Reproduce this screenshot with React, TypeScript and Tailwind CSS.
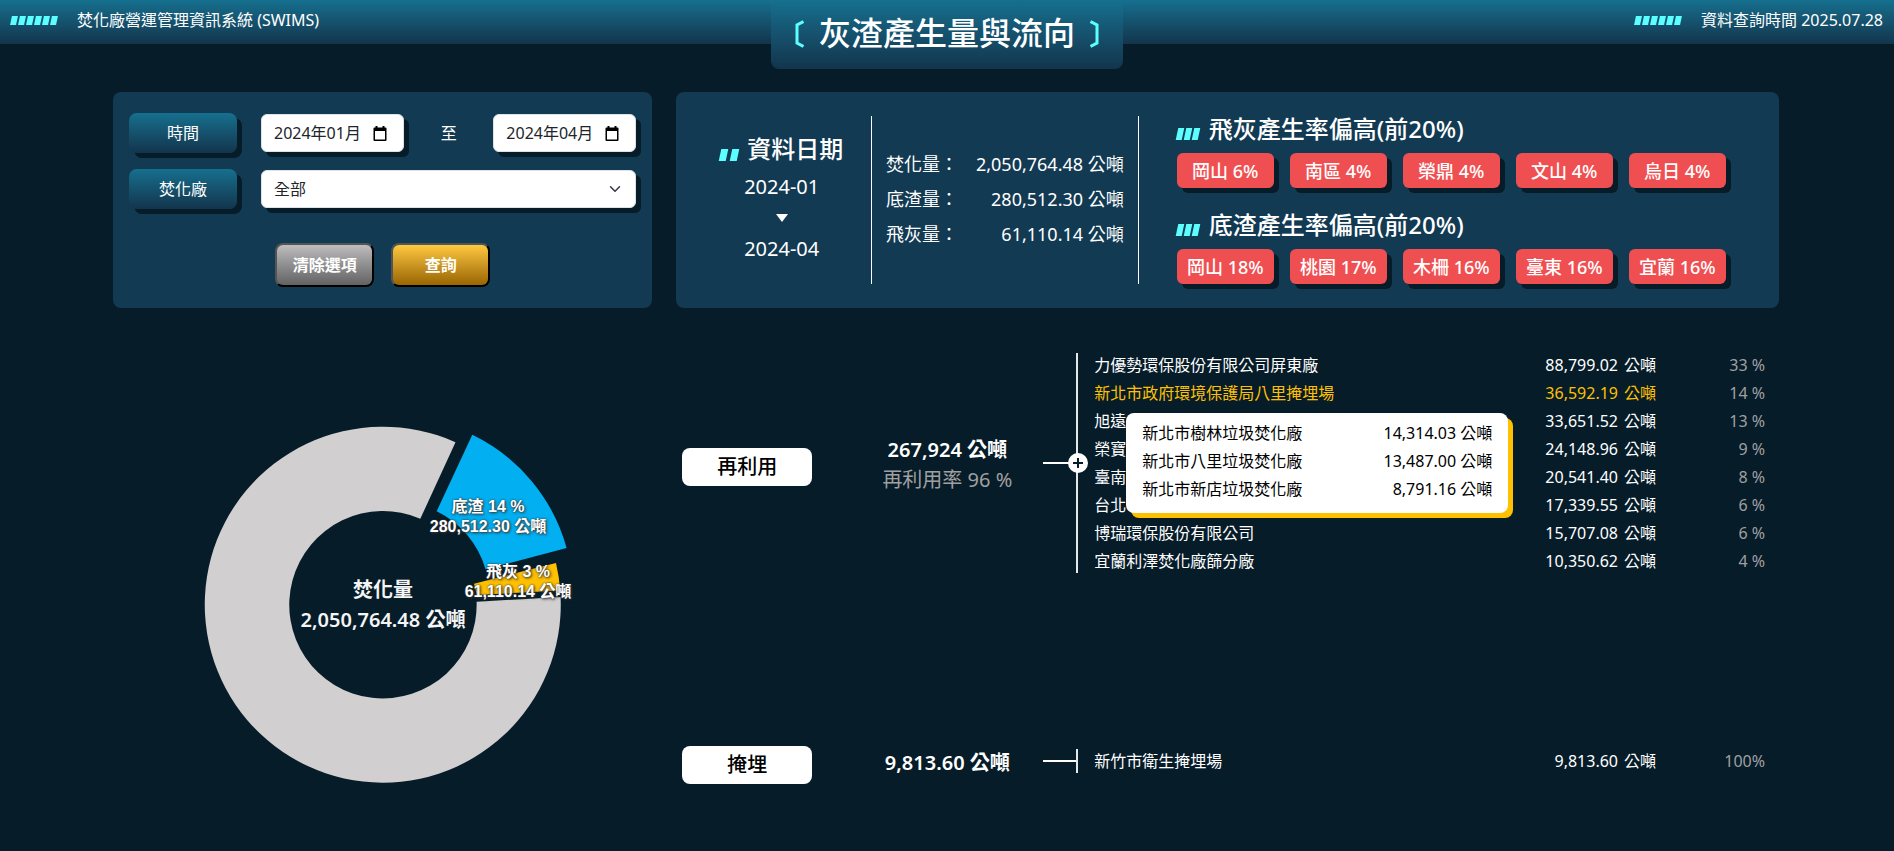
import React from "react";

const sans = "font-['Noto_Sans','Noto_Sans_CJK_TC',sans-serif]";
const hardShadow = "shadow-[5px_5px_0_#061c29]";

const barSizes = {
  sm: { bar: "h-[9px] w-1.5", gap: "gap-0.5" },
  md: { bar: "h-3 w-[6px]", gap: "gap-0.5" },
  lg: { bar: "h-3 w-[7px]", gap: "gap-1" },
};

function Bars({ count, size = "sm" }: { count: number; size?: keyof typeof barSizes }) {
  const { bar, gap } = barSizes[size];
  return (
    <span aria-hidden="true" className={`flex ${gap}`}>
      {Array.from({ length: count }, (_, i) => (
        <span key={i} className={`${bar} -skew-x-12 bg-[#5cffff]`} />
      ))}
    </span>
  );
}

function Header() {
  return (
    <header className="relative flex h-11 items-start justify-between bg-linear-to-b from-[#15708f] to-[#12354d] px-[11px] pt-2 text-base leading-6 text-white">
      <div className="flex items-center gap-5">
        <Bars count={6} />
        <span>焚化廠營運管理資訊系統 (SWIMS)</span>
      </div>
      <h1 className="absolute top-0 left-1/2 flex h-[69px] w-[352px] -translate-x-1/2 items-start justify-center gap-[15px] rounded-b-lg bg-linear-to-b from-[#15708f] to-[#12354d] pt-3 text-[32px] leading-[42px] font-medium">
        <Bracket />
        <span>灰渣產生量與流向</span>
        <Bracket flip />
      </h1>
      <div className="flex items-center gap-5">
        <Bars count={6} />
        <span>資料查詢時間 2025.07.28</span>
      </div>
    </header>
  );
}

function Bracket({ flip = false }: { flip?: boolean }) {
  return (
    <svg aria-hidden="true" width="9" height="28" viewBox="0 0 9 28" className={flip ? "mt-2 -scale-x-100" : "mt-2"}>
      <path d="M8.5 1.5 L2 5 V23 L8.5 26.5" fill="none" stroke="#5cffff" strokeWidth="3" />
    </svg>
  );
}

function CalendarIcon() {
  return (
    <svg aria-hidden="true" width="14" height="15" viewBox="0 0 14 15">
      <path
        fillRule="evenodd"
        d="M2.5 0h2v1.5h5V0h2v1.5h1a1 1 0 0 1 1 1V14a1 1 0 0 1-1 1h-11a1 1 0 0 1-1-1V2.500a1 1 0 0 1 1-1h1zM2 5v8.500h10V5z"
        fill="#000"
      />
    </svg>
  );
}

function MonthField({ id, label, value }: { id: string; label: string; value: string }) {
  return (
    <div className={`flex h-[38px] w-[143px] items-center rounded-md border border-[#dee2e6] bg-white pr-4 pl-3 ${hardShadow}`}>
      <input
        id={id}
        aria-label={label}
        defaultValue={value}
        className="w-full min-w-0 flex-1 bg-transparent text-base text-[#212529] outline-none"
      />
      <button type="button" aria-label={`${label} 月曆`}>
        <CalendarIcon />
      </button>
    </div>
  );
}

const labelBox = `flex h-10 w-[108px] shrink-0 items-center justify-center rounded-lg bg-linear-to-b from-[#15708f] to-[#12354d] text-base text-white ${hardShadow}`;
const actionButton =
  "h-11 w-[99px] rounded-lg border-2 border-black [border-style:outset] text-base font-bold text-white";

function FilterPanel() {
  return (
    <form className="flex h-[216px] flex-col rounded-lg bg-[#133a53] px-4 pt-[21px]">
      <div className="flex items-center gap-6">
        <label htmlFor="from" className={labelBox}>時間</label>
        <div className="flex flex-1 items-center justify-between text-base text-white">
          <MonthField id="from" label="起始" value="2024年01月" />
          <span>至</span>
          <MonthField id="to" label="結束" value="2024年04月" />
        </div>
      </div>
      <div className="mt-4 flex items-center gap-6">
        <label htmlFor="plant" className={labelBox}>焚化廠</label>
        <div className="relative flex-1">
          <select
            id="plant"
            defaultValue="all"
            className={`h-[38px] w-full appearance-none rounded-md border border-[#dee2e6] bg-white px-3 text-base text-[#212529] ${hardShadow}`}
          >
            <option value="all">全部</option>
          </select>
          <svg aria-hidden="true" viewBox="0 0 16 16" className="pointer-events-none absolute top-[13px] right-[15px] size-3">
            <path d="m2 5 6 6 6-6" fill="none" stroke="#343a40" strokeWidth="2" strokeLinecap="round" strokeLinejoin="round" />
          </svg>
        </div>
      </div>
      <div className="mt-[34px] flex justify-center gap-[17px]">
        <button type="reset" className={`${actionButton} bg-linear-to-b from-[#bfbdbd] to-[#636363]`}>清除選項</button>
        <button type="button" className={`${actionButton} bg-linear-to-b from-[#ffc93f] to-[#996600]`}>查詢</button>
      </div>
    </form>
  );
}

const totals = [
  { name: "焚化量：", value: "2,050,764.48 公噸" },
  { name: "底渣量：", value: "280,512.30 公噸" },
  { name: "飛灰量：", value: "61,110.14 公噸" },
];

const alerts = [
  { title: "飛灰產生率偏高(前20%)", tags: ["岡山 6%", "南區 4%", "榮鼎 4%", "文山 4%", "烏日 4%"] },
  { title: "底渣產生率偏高(前20%)", tags: ["岡山 18%", "桃園 17%", "木柵 16%", "臺東 16%", "宜蘭 16%"] },
];

function SummaryPanel() {
  return (
    <section className="grid h-[216px] grid-cols-[172fr_267fr_617fr] rounded-lg bg-[#133a53] p-6 text-white">
      <div className="flex flex-col items-center border-r border-white pt-[17px] pr-2 text-xl">
        <h2 className="flex items-end gap-[9px] text-2xl leading-8 font-medium">
          <span className="pb-1"><Bars count={2} size="lg" /></span>
          資料日期
        </h2>
        <span className="mt-1.5 leading-8">2024-01</span>
        <svg aria-hidden="true" width="12" height="8" viewBox="0 0 12 8" className="my-[11px]">
          <path d="M0 0h12L6 8z" fill="#fff" />
        </svg>
        <span className="leading-8">2024-04</span>
      </div>
      <dl className="flex flex-col border-r border-white px-3.5 pt-[31px] text-lg leading-[35px]">
        {totals.map((t) => (
          <div key={t.name} className="flex justify-between">
            <dt>{t.name}</dt>
            <dd>{t.value}</dd>
          </div>
        ))}
      </dl>
      <div className="flex flex-col gap-6 pl-[38px]">
        {alerts.map((a) => (
          <div key={a.title}>
            <h2 className="mb-3 flex items-end gap-2.5 text-2xl leading-[25px] font-medium">
              <span className="pb-px"><Bars count={3} size="md" /></span>
              {a.title}
            </h2>
            <ul className="flex gap-4">
              {a.tags.map((t) => (
                <li
                  key={t}
                  className={`flex h-[35px] w-[97px] items-center justify-center rounded-md bg-[#f04f52] text-lg font-medium whitespace-nowrap ${hardShadow}`}
                >
                  {t}
                </li>
              ))}
            </ul>
          </div>
        ))}
      </div>
    </section>
  );
}

function Donut() {
  return (
    <svg viewBox="-17 0 440 400" width="440" height="400" role="img" aria-label="焚化量" textAnchor="middle">
      <path d="M380.600 197A178 178 0 1 1 275.500 42.200L240.300 118.800A93.700 93.700 0 1 0 296.600 201.700Z" fill="#d1cfcf" />
      <path d="M292.300 34.800A178 178 0 0 1 386.600 148L305.500 169.300A93.700 93.700 0 0 0 256.700 111.200Z" fill="#02b0f2" />
      <path d="M376 163A178 178 0 0 1 380.200 190.600L296.700 195A93.700 93.700 0 0 0 294 183.700Z" fill="#ffc000" />
      <g fill="#f5f5f5" className="text-xl font-semibold">
        <text x="203" y="197">焚化量</text>
        <text x="203" y="227">2,050,764.48 公噸</text>
      </g>
      <g
        fill="#fff"
        className="font-['Liberation_Sans','Noto_Sans_CJK_TC',sans-serif] text-base font-bold [text-shadow:0_0_2px_#333,1px_1px_3px_#333]"
      >
        <text x="308" y="112">底渣 14 %</text>
        <text x="308" y="132">280,512.30 公噸</text>
        <text x="338" y="177">飛灰 3 %</text>
        <text x="338" y="197">61,110.14 公噸</text>
      </g>
    </svg>
  );
}

type Row = { name: string; amount: string; share: string; active?: boolean };

const reuse: Row[] = [
  { name: "力優勢環保股份有限公司屏東廠", amount: "88,799.02", share: "33 %" },
  { name: "新北市政府環境保護局八里掩埋場", amount: "36,592.19", share: "14 %", active: true },
  { name: "旭遠", amount: "33,651.52", share: "13 %" },
  { name: "榮寶", amount: "24,148.96", share: "9 %" },
  { name: "臺南", amount: "20,541.40", share: "8 %" },
  { name: "台北", amount: "17,339.55", share: "6 %" },
  { name: "博瑞環保股份有限公司", amount: "15,707.08", share: "6 %" },
  { name: "宜蘭利澤焚化廠篩分廠", amount: "10,350.62", share: "4 %" },
];

const landfill: Row[] = [{ name: "新竹市衛生掩埋場", amount: "9,813.60", share: "100%" }];

const sources = [
  { name: "新北市樹林垃圾焚化廠", amount: "14,314.03 公噸" },
  { name: "新北市八里垃圾焚化廠", amount: "13,487.00 公噸" },
  { name: "新北市新店垃圾焚化廠", amount: "8,791.16 公噸" },
];

function FlowTable({ rows }: { rows: Row[] }) {
  return (
    <table className="w-full text-base leading-7 text-white">
      <tbody>
        {rows.map((r) => (
          <tr key={r.name} className={r.active ? "text-[#ffc000]" : ""}>
            <td className="p-0">{r.name}</td>
            <td className="p-0 text-right">
              <span className="mr-1.5">{r.amount}</span>公噸
            </td>
            <td className="w-[109px] p-0 text-right text-[#a0a0a0]">{r.share}</td>
          </tr>
        ))}
      </tbody>
    </table>
  );
}

function FlowGroup({
  title,
  total,
  note,
  rows,
  line,
  expandable,
  children,
}: {
  title: string;
  total: string;
  note?: string;
  rows: Row[];
  line: string;
  expandable?: boolean;
  children?: React.ReactNode;
}) {
  return (
    <section className="flex items-center pr-3.5 pl-1.5">
      <div className="pt-2">
        <h3 className="flex h-[38px] w-[130px] items-center justify-center rounded-lg bg-white text-xl font-medium text-black">
          {title}
        </h3>
      </div>
      <div className="ml-[39px] w-48 pt-1 text-center text-xl leading-[30px] text-white">
        <p className="font-semibold">{total}</p>
        {note && <p className="text-[#a0a0a0]">{note}</p>}
      </div>
      <div className="relative flex items-center">
        <span className="h-0.5 w-[33px] bg-white" />
        <span className={`w-0.5 bg-[#e4e8ea] ${line}`} />
        {expandable && (
          <button
            type="button"
            aria-label="展開"
            className="absolute -right-2.5 flex size-5 items-center justify-center rounded-full bg-white"
          >
            <svg aria-hidden="true" width="10" height="10" viewBox="0 0 10 10">
              <path d="M5 0v10M0 5h10" stroke="#061c29" strokeWidth="2" />
            </svg>
          </button>
        )}
      </div>
      <div className="relative ml-4 flex-1">
        <FlowTable rows={rows} />
        {children}
      </div>
    </section>
  );
}

function SourceTooltip() {
  return (
    <div
      role="tooltip"
      className="absolute top-[62px] left-8 w-[382px] rounded-lg bg-white px-4 pt-1.5 pb-2.5 text-base leading-7 text-black shadow-[5px_5px_0_#ffc000]"
    >
      {sources.map((s) => (
        <div key={s.name} className="flex justify-between">
          <span>{s.name}</span>
          <span>{s.amount}</span>
        </div>
      ))}
    </div>
  );
}

export default function App() {
  return (
    <div className={`min-h-screen bg-[#061c29] ${sans}`}>
      <Header />
      <main className="grid grid-cols-3 gap-x-6 pt-12 pr-[115px] pl-[113px]">
        <div>
          <FilterPanel />
          <div className="flex justify-center pt-[92px]">
            <Donut />
          </div>
        </div>
        <div className="col-span-2">
          <SummaryPanel />
          <div className="pt-[43px]">
            <FlowGroup title="再利用" total="267,924 公噸" note="再利用率 96 %" rows={reuse} line="h-[220px]" expandable>
              <SourceTooltip />
            </FlowGroup>
            <div className="pt-[163px]">
              <FlowGroup title="掩埋" total="9,813.60 公噸" rows={landfill} line="h-6" />
            </div>
          </div>
        </div>
      </main>
    </div>
  );
}
